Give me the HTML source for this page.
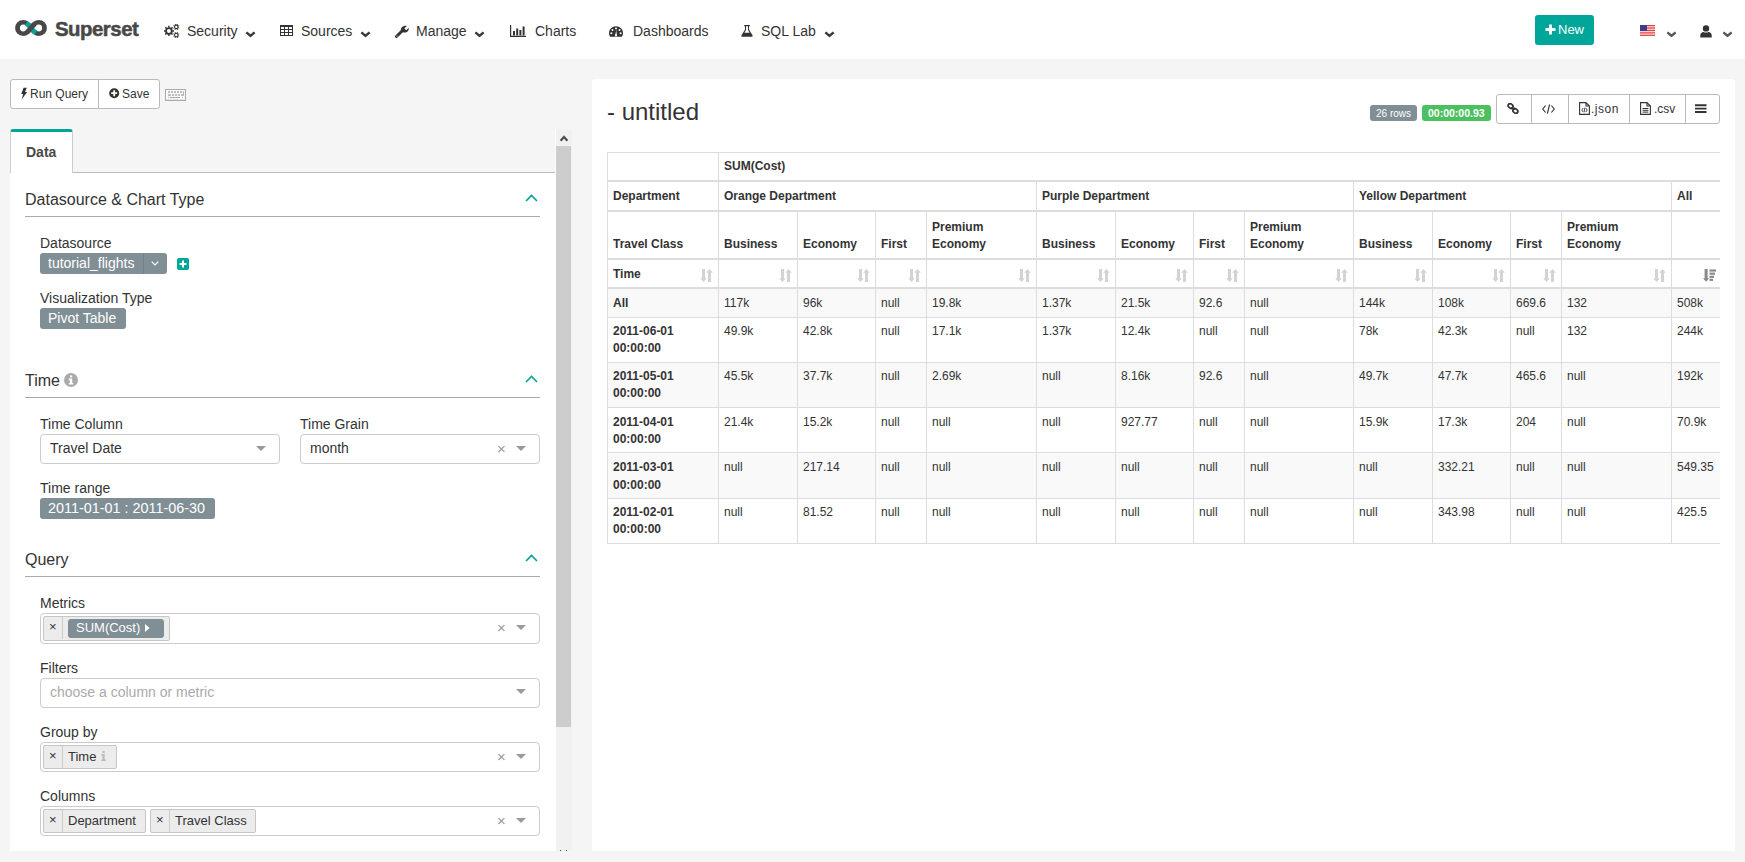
<!DOCTYPE html>
<html><head><meta charset="utf-8"><style>
*{box-sizing:border-box;margin:0;padding:0}
html,body{width:1745px;height:862px;overflow:hidden}
body{background:#f5f5f5;font-family:"Liberation Sans",sans-serif;color:#333;font-size:14px;position:relative}
.abs{position:absolute}
#nav{position:absolute;left:0;top:0;width:1745px;height:59px;background:#fff}
.nt{position:absolute;top:23px;font-size:14px;color:#333;line-height:16px;white-space:nowrap}
.car{position:absolute}

.btn{background:#fff;border:1px solid #bbb}
.t12{position:absolute;font-size:12px;line-height:14px;color:#333;white-space:nowrap}
.t14{font-size:14px;line-height:16px;color:#333;white-space:nowrap}
.wt14{font-size:14px;line-height:16px;color:#fff;white-space:nowrap}
.h16{position:absolute;font-size:16px;line-height:18px;color:#333;white-space:nowrap}
.lbl{position:absolute;font-size:14px;line-height:16px;color:#333;white-space:nowrap}
.hr{height:1px;background:#aaa}
.chev{position:absolute}
.sel{background:#fff;border:1px solid #ccc;border-radius:4px}
.arr{position:absolute;width:0;height:0;border-left:5px solid transparent;border-right:5px solid transparent;border-top:5px solid #999}
.xx{position:absolute;font-size:15px;line-height:16px;color:#999}
.tag{background:#ececec;border:1px solid #c6c6c6;border-radius:2px}
.tx{position:absolute;font-size:13px;line-height:14px;color:#333}

.pt{border-collapse:collapse;table-layout:fixed;width:1114px;font-size:12px;color:#333}
.pt th,.pt td{border:1px solid #ddd;padding:5px;line-height:17.14px;text-align:left;vertical-align:top}
.pt thead th{vertical-align:bottom;border-bottom-width:2px;font-weight:bold}
.pt tbody th{font-weight:bold}
.pt tbody tr:nth-child(odd){background:#f9f9f9}
.pt .si{float:right;margin-top:2px}
.pt .tm .si{margin-top:4px}
.pt .sd{margin-right:2px}
.pt .tm span{position:relative;top:1px}
.pt tbody th,.pt tbody td{line-height:17px}
.pt tr.lh18 th,.pt tr.lh18 td{line-height:18px}
.pt tr.r3 th{padding-top:6.72px}
.pt tr.dn th,.pt tr.dn td{padding-top:6px;padding-bottom:4px}
.pt tr.lh175 th,.pt tr.lh175 td{line-height:17.5px}
</style></head><body>
<div id="nav">
  <svg class="abs" style="left:15px;top:20px" width="32" height="16" viewBox="0 0 32 17" preserveAspectRatio="none">
    <path d="M8.5 2.5 C4.5 2.5 2.5 5.2 2.5 8.5 C2.5 11.8 4.5 14.5 8.5 14.5 C12.5 14.5 14.5 11 16 8.5 C17.5 6 19.5 2.5 23.5 2.5 C27.5 2.5 29.5 5.2 29.5 8.5 C29.5 11.8 27.5 14.5 23.5 14.5 C19.5 14.5 17.5 11 16 8.5 C14.5 6 12.5 2.5 8.5 2.5 Z" fill="none" stroke="#484848" stroke-width="4.8"/>
    <path d="M11.2 3.4 C13.5 4.8 14.7 6.6 16 8.5 C17.3 10.4 18.5 12.2 20.8 13.6" fill="none" stroke="#00a699" stroke-width="4.8"/>
    <path d="M12 12.9 C13.9 11.4 14.9 9.9 16 8.5 C17.1 7.1 18.1 5.6 20 4.1" fill="none" stroke="#484848" stroke-width="4.8"/>
  </svg>
  <div class="nt" style="left:55px;top:18px;font-size:20.4px;font-weight:bold;color:#484848;line-height:22px;-webkit-text-stroke:0.5px #484848;letter-spacing:-0.5px">Superset</div>

  <!-- cogs -->
  <svg class="abs" style="left:164px;top:24px" width="17" height="15" viewBox="0 0 17 15"><circle cx="4.9" cy="6.95" r="2.9" fill="none" stroke="#333" stroke-width="1.8"/><line x1="8.30" y1="6.95" x2="10.00" y2="6.95" stroke="#333" stroke-width="1.5"/><line x1="7.30" y1="9.35" x2="8.51" y2="10.56" stroke="#333" stroke-width="1.5"/><line x1="4.90" y1="10.35" x2="4.90" y2="12.05" stroke="#333" stroke-width="1.5"/><line x1="2.50" y1="9.35" x2="1.29" y2="10.56" stroke="#333" stroke-width="1.5"/><line x1="1.50" y1="6.95" x2="-0.20" y2="6.95" stroke="#333" stroke-width="1.5"/><line x1="2.50" y1="4.55" x2="1.29" y2="3.34" stroke="#333" stroke-width="1.5"/><line x1="4.90" y1="3.55" x2="4.90" y2="1.85" stroke="#333" stroke-width="1.5"/><line x1="7.30" y1="4.55" x2="8.51" y2="3.34" stroke="#333" stroke-width="1.5"/><circle cx="12.3" cy="2.9" r="1.75" fill="none" stroke="#333" stroke-width="1.1"/><line x1="14.24" y1="3.70" x2="15.16" y2="4.09" stroke="#333" stroke-width="1.0"/><line x1="13.10" y1="4.84" x2="13.49" y2="5.76" stroke="#333" stroke-width="1.0"/><line x1="11.50" y1="4.84" x2="11.11" y2="5.76" stroke="#333" stroke-width="1.0"/><line x1="10.36" y1="3.70" x2="9.44" y2="4.09" stroke="#333" stroke-width="1.0"/><line x1="10.36" y1="2.10" x2="9.44" y2="1.71" stroke="#333" stroke-width="1.0"/><line x1="11.50" y1="0.96" x2="11.11" y2="0.04" stroke="#333" stroke-width="1.0"/><line x1="13.10" y1="0.96" x2="13.49" y2="0.04" stroke="#333" stroke-width="1.0"/><line x1="14.24" y1="2.10" x2="15.16" y2="1.71" stroke="#333" stroke-width="1.0"/><circle cx="12.3" cy="11.05" r="1.75" fill="none" stroke="#333" stroke-width="1.1"/><line x1="14.24" y1="11.85" x2="15.16" y2="12.24" stroke="#333" stroke-width="1.0"/><line x1="13.10" y1="12.99" x2="13.49" y2="13.91" stroke="#333" stroke-width="1.0"/><line x1="11.50" y1="12.99" x2="11.11" y2="13.91" stroke="#333" stroke-width="1.0"/><line x1="10.36" y1="11.85" x2="9.44" y2="12.24" stroke="#333" stroke-width="1.0"/><line x1="10.36" y1="10.25" x2="9.44" y2="9.86" stroke="#333" stroke-width="1.0"/><line x1="11.50" y1="9.11" x2="11.11" y2="8.19" stroke="#333" stroke-width="1.0"/><line x1="13.10" y1="9.11" x2="13.49" y2="8.19" stroke="#333" stroke-width="1.0"/><line x1="14.24" y1="10.25" x2="15.16" y2="9.86" stroke="#333" stroke-width="1.0"/></svg>
  <div class="nt" style="left:187px">Security</div>
  <svg class="car" style="left:245px;top:31px" width="11" height="7" viewBox="0 0 11 7"><path d="M1.4 1.4 L5.5 4.9 L9.6 1.4" fill="none" stroke="#3a3a3a" stroke-width="2.5" stroke-linejoin="round"/></svg>

  <!-- table -->
  <svg class="abs" style="left:280px;top:25px" width="13" height="11" viewBox="0 0 13 11" shape-rendering="crispEdges"><rect width="13" height="11" fill="#333"/><rect x="1" y="2" width="3" height="2" fill="#fff"/><rect x="1" y="5" width="3" height="2" fill="#fff"/><rect x="1" y="8" width="3" height="2" fill="#fff"/><rect x="5" y="2" width="3" height="2" fill="#fff"/><rect x="5" y="5" width="3" height="2" fill="#fff"/><rect x="5" y="8" width="3" height="2" fill="#fff"/><rect x="9" y="2" width="3" height="2" fill="#fff"/><rect x="9" y="5" width="3" height="2" fill="#fff"/><rect x="9" y="8" width="3" height="2" fill="#fff"/></svg>
  <div class="nt" style="left:301px">Sources</div>
  <svg class="car" style="left:360px;top:31px" width="11" height="7" viewBox="0 0 11 7"><path d="M1.4 1.4 L5.5 4.9 L9.6 1.4" fill="none" stroke="#3a3a3a" stroke-width="2.5" stroke-linejoin="round"/></svg>

  <!-- wrench -->
  <svg class="abs" style="left:395px;top:25px" width="14" height="13" viewBox="0 0 14 13">
    <path d="M1.5 11.5 L7 6" stroke="#333" stroke-width="3" stroke-linecap="round"/>
    <path d="M6.2 6.8 C5.2 4.5 6.2 1.4 9.2 0.9 C10.2 0.7 11 0.9 11.6 1.2 L9.4 3.3 L10.2 4.6 L11.6 4.9 L13.6 2.7 C14.1 4.6 13.2 6.8 11 7.4 C9.7 7.8 8.4 7.6 7.4 6.9 Z" fill="#333"/>
    <circle cx="2" cy="11" r="0.6" fill="#fff"/>
  </svg>
  <div class="nt" style="left:416px">Manage</div>
  <svg class="car" style="left:474px;top:31px" width="11" height="7" viewBox="0 0 11 7"><path d="M1.4 1.4 L5.5 4.9 L9.6 1.4" fill="none" stroke="#3a3a3a" stroke-width="2.5" stroke-linejoin="round"/></svg>

  <!-- bar chart -->
  <svg class="abs" style="left:510px;top:25px" width="16" height="12" viewBox="0 0 16 12">
    <path d="M0.6 0 V11.4 H16" fill="none" stroke="#333" stroke-width="1.2"/>
    <rect x="3" y="6" width="2" height="4.5" fill="#333"/>
    <rect x="6.2" y="3.5" width="2" height="7" fill="#333"/>
    <rect x="9.4" y="5" width="2" height="5.5" fill="#333"/>
    <rect x="12.6" y="1.5" width="2" height="9" fill="#333"/>
  </svg>
  <div class="nt" style="left:535px">Charts</div>

  <!-- dashboard -->
  <svg class="abs" style="left:609px;top:26px" width="14" height="11" viewBox="0 0 14 11">
    <path d="M7 0.2 C3.1 0.2 0 3.3 0 7.1 C0 8.5 0.4 9.8 1.1 10.8 L12.9 10.8 C13.6 9.8 14 8.5 14 7.1 C14 3.3 10.9 0.2 7 0.2 Z" fill="#333"/>
    <g fill="#fff"><circle cx="2.4" cy="7.3" r="1"/><circle cx="3.5" cy="4" r="1"/><circle cx="7" cy="2.4" r="1"/><circle cx="10.5" cy="4" r="1"/><circle cx="11.6" cy="7.3" r="1"/></g>
    <path d="M6.2 9.8 L7.2 4 L7.9 9.8 Z" fill="#fff"/><circle cx="7" cy="9.4" r="1.1" fill="#fff"/>
  </svg>
  <div class="nt" style="left:633px">Dashboards</div>

  <!-- flask -->
  <svg class="abs" style="left:741px;top:25px" width="12" height="12" viewBox="0 0 12 12">
    <path d="M3.2 0 H8.8 V1.2 H8 V4.6 L11.6 10.6 C11.9 11.3 11.6 11.8 10.9 11.8 H1.1 C0.4 11.8 0.1 11.3 0.4 10.6 L4 4.6 V1.2 H3.2 Z" fill="#333"/>
    <path d="M5 1.2 V5 L3.4 7.8 H8.6 L7 5 V1.2 Z" fill="#fff"/>
  </svg>
  <div class="nt" style="left:761px">SQL Lab</div>
  <svg class="car" style="left:824px;top:31px" width="11" height="7" viewBox="0 0 11 7"><path d="M1.4 1.4 L5.5 4.9 L9.6 1.4" fill="none" stroke="#3a3a3a" stroke-width="2.5" stroke-linejoin="round"/></svg>

  <!-- New button -->
  <div class="abs" style="left:1535px;top:15px;width:59px;height:30px;background:#00a699;border-radius:3px"></div>
  <svg class="abs" style="left:1545px;top:24px" width="11" height="11" viewBox="0 0 11 11"><path d="M5.5 0.5 V10.5 M0.5 5.5 H10.5" stroke="#fff" stroke-width="2.8"/></svg>
  <div class="nt" style="left:1558px;top:22px;color:#fff;font-size:13px">New</div>

  <!-- flag -->
  <svg class="abs" style="left:1640px;top:25px" width="15" height="11" viewBox="0 0 15 11">
    <rect width="15" height="11" fill="#fff"/>
    <g fill="#d22">
      <rect y="0" width="15" height="0.85"/><rect y="1.7" width="15" height="0.85"/><rect y="3.4" width="15" height="0.85"/><rect y="5.1" width="15" height="0.85"/><rect y="6.8" width="15" height="0.85"/><rect y="8.5" width="15" height="0.85"/><rect y="10.2" width="15" height="0.8"/>
    </g>
    <rect width="7" height="5.9" fill="#3c3b8e"/>
  </svg>
  <svg class="car" style="left:1666px;top:31px" width="11" height="7" viewBox="0 0 11 7"><path d="M1.4 1.4 L5.5 4.9 L9.6 1.4" fill="none" stroke="#555" stroke-width="2.5" stroke-linejoin="round"/></svg>
  <!-- user -->
  <svg class="abs" style="left:1700px;top:25px" width="12" height="13" viewBox="0 0 12 13">
    <circle cx="6" cy="3.4" r="3.2" fill="#333"/>
    <path d="M0.3 12.6 V10.3 C0.3 8.2 1.8 7 3.6 6.9 C4.2 7.4 5 7.6 6 7.6 C7 7.6 7.8 7.4 8.4 6.9 C10.2 7 11.7 8.2 11.7 10.3 V12.6 Z" fill="#333"/>
  </svg>
  <svg class="car" style="left:1722px;top:31px" width="11" height="7" viewBox="0 0 11 7"><path d="M1.4 1.4 L5.5 4.9 L9.6 1.4" fill="none" stroke="#555" stroke-width="2.5" stroke-linejoin="round"/></svg>
</div>
<!-- LEFT -->
<div class="abs btn" style="left:10px;top:79px;width:89px;height:30px;border-radius:3px 0 0 3px"></div>
<div class="abs btn" style="left:98px;top:79px;width:62px;height:30px;border-radius:0 3px 3px 0"></div>
<svg class="abs" style="left:20px;top:87px" width="8" height="13" viewBox="0 0 8 13"><path d="M3.6 0.8 H6.8 L5 5 H7.2 L1.6 12.6 L3.2 7 H1.2 Z" fill="#333"/></svg>
<div class="t12" style="left:30px;top:87px">Run Query</div>
<svg class="abs" style="left:109px;top:88px" width="11" height="11" viewBox="0 0 11 11"><circle cx="5.2" cy="5.2" r="5" fill="#333"/><path d="M5.2 2.2 V8.2 M2.2 5.2 H8.2" stroke="#fff" stroke-width="1.8"/></svg>
<div class="t12" style="left:122px;top:87px">Save</div>
<svg class="abs" style="left:165px;top:89px" width="21" height="12" viewBox="0 0 21 12" shape-rendering="crispEdges">
  <rect x="0" y="0" width="21" height="12" rx="1" fill="#aaa"/><rect x="1" y="1" width="19" height="10" fill="#fafafa"/><rect x="1" y="10" width="19" height="1" fill="#e4e4e4"/>
  <g fill="#bdbdbd"><rect x="3" y="2" width="2" height="2"/><rect x="6" y="2" width="2" height="2"/><rect x="9" y="2" width="2" height="2"/><rect x="12" y="2" width="2" height="2"/><rect x="15" y="2" width="2" height="2"/><rect x="18" y="2" width="1" height="5"/>
  <rect x="3" y="5" width="3" height="2"/><rect x="7" y="5" width="2" height="2"/><rect x="10" y="5" width="2" height="2"/><rect x="13" y="5" width="2" height="2"/><rect x="16" y="5" width="2" height="2"/>
  <rect x="3" y="8" width="1" height="1"/><rect x="5" y="8" width="10" height="1" fill="#aaa"/><rect x="17" y="8" width="1" height="1"/></g>
</svg>

<!-- tabs -->
<div class="abs" style="left:10px;top:172px;width:546px;height:1px;background:#bbb"></div>
<div class="abs" style="left:10px;top:129px;width:63px;height:44px;background:#fff;border:1px solid #ccc;border-top:3px solid #00a699;border-bottom:none;border-radius:3px 3px 0 0"></div>
<div class="abs" style="left:26px;top:144px;font-size:14px;font-weight:bold;color:#484848;line-height:16px">Data</div>
<div class="abs" style="left:10px;top:173px;width:546px;height:678px;background:#fff"></div>

<!-- scrollbar -->
<div class="abs" style="left:556px;top:129px;width:16px;height:722px;background:#f1f1f1"></div>
<div class="abs" style="left:556px;top:146px;width:15px;height:581px;background:#cdcdcd"></div>
<svg class="abs" style="left:559px;top:134px" width="10" height="8" viewBox="0 0 10 8"><path d="M1.6 6.8 L5 3 L8.4 6.8" fill="none" stroke="#505050" stroke-width="2.2" stroke-linejoin="miter"/></svg>
<div class="abs" style="left:555px;top:129px;width:1px;height:44px;background:#fff"></div>
<div class="abs" style="left:560px;top:850px;width:1px;height:1px;background:#444"></div>
<div class="abs" style="left:566px;top:850px;width:1px;height:1px;background:#444"></div>

<!-- section 1 -->
<div class="h16" style="left:25px;top:191px">Datasource &amp; Chart Type</div>
<svg class="chev" style="left:525px;top:194px" width="13" height="8" viewBox="0 0 13 8"><path d="M1 7 L6.5 1.5 L12 7" fill="none" stroke="#00a699" stroke-width="1.6"/></svg>
<div class="abs hr" style="left:25px;top:216px;width:515px"></div>
<div class="lbl" style="left:40px;top:235px">Datasource</div>
<div class="abs" style="left:40px;top:253px;width:127px;height:21px;background:#808e95;border-radius:3px"></div>
<div class="abs" style="left:143px;top:253px;width:1px;height:21px;background:#748187"></div>
<div class="abs wt14" style="left:48px;top:255px">tutorial_flights</div>
<svg class="abs" style="left:151px;top:261px" width="8" height="5" viewBox="0 0 8 5"><path d="M0.7 0.7 L4 4 L7.3 0.7" fill="none" stroke="#fff" stroke-width="1.2"/></svg>
<div class="abs" style="left:177px;top:258px;width:12px;height:12px;background:#00a699;border-radius:2px"></div>
<svg class="abs" style="left:177px;top:258px" width="12" height="12" viewBox="0 0 12 12"><path d="M6 2.5 V9.5 M2.5 6 H9.5" stroke="#fff" stroke-width="2"/></svg>
<div class="lbl" style="left:40px;top:290px">Visualization Type</div>
<div class="abs" style="left:40px;top:308px;width:86px;height:21px;background:#808e95;border-radius:3px"></div>
<div class="abs wt14" style="left:48px;top:310px">Pivot Table</div>

<!-- section time -->
<div class="h16" style="left:25px;top:372px">Time</div>
<svg class="abs" style="left:64px;top:373px" width="14" height="14" viewBox="0 0 14 14"><circle cx="7" cy="7" r="7" fill="#aaa"/><rect x="6" y="2.4" width="2.2" height="2" fill="#fff"/><path d="M4.8 5.6 H8.2 V10 H9.2 V11.6 H4.8 V10 H5.9 V7.2 H4.8 Z" fill="#fff"/></svg>
<svg class="chev" style="left:525px;top:375px" width="13" height="8" viewBox="0 0 13 8"><path d="M1 7 L6.5 1.5 L12 7" fill="none" stroke="#00a699" stroke-width="1.6"/></svg>
<div class="abs hr" style="left:25px;top:397px;width:515px"></div>
<div class="lbl" style="left:40px;top:416px">Time Column</div>
<div class="lbl" style="left:300px;top:416px">Time Grain</div>
<div class="abs sel" style="left:40px;top:434px;width:240px;height:30px"></div>
<div class="abs t14" style="left:50px;top:440px">Travel Date</div>
<div class="arr" style="left:256px;top:446px"></div>
<div class="abs sel" style="left:300px;top:434px;width:240px;height:30px"></div>
<div class="abs t14" style="left:310px;top:440px">month</div>
<div class="xx" style="left:497px;top:441px">×</div>
<div class="arr" style="left:516px;top:446px"></div>
<div class="lbl" style="left:40px;top:480px">Time range</div>
<div class="abs" style="left:40px;top:498px;width:175px;height:21px;background:#808e95;border-radius:3px"></div>
<div class="abs wt14" style="left:48px;top:500px;font-size:14.4px">2011-01-01 : 2011-06-30</div>

<!-- section query -->
<div class="h16" style="left:25px;top:551px">Query</div>
<svg class="chev" style="left:525px;top:554px" width="13" height="8" viewBox="0 0 13 8"><path d="M1 7 L6.5 1.5 L12 7" fill="none" stroke="#00a699" stroke-width="1.6"/></svg>
<div class="abs hr" style="left:25px;top:576px;width:515px"></div>

<div class="lbl" style="left:40px;top:595px">Metrics</div>
<div class="abs sel" style="left:40px;top:613px;width:500px;height:31px"></div>
<div class="abs tag" style="left:43px;top:616px;width:127px;height:25px"></div>
<div class="abs" style="left:62px;top:617px;width:1px;height:22px;background:#ccc"></div>
<div class="tx" style="left:49px;top:620px">×</div>
<div class="abs" style="left:68px;top:619px;width:96px;height:19px;background:#808e95;border-radius:3px"></div>
<div class="abs" style="left:76px;top:620px;font-size:13px;color:#fff;line-height:15px">SUM(Cost)</div>
<svg class="abs" style="left:145px;top:624px" width="5" height="8" viewBox="0 0 5 8"><path d="M0 0 L4.6 4 L0 8 Z" fill="#fff"/></svg>
<div class="xx" style="left:497px;top:620px">×</div>
<div class="arr" style="left:516px;top:625px"></div>

<div class="lbl" style="left:40px;top:660px">Filters</div>
<div class="abs sel" style="left:40px;top:678px;width:500px;height:30px"></div>
<div class="abs t14" style="left:50px;top:684px;color:#aaa">choose a column or metric</div>
<div class="arr" style="left:516px;top:689px"></div>

<div class="lbl" style="left:40px;top:724px">Group by</div>
<div class="abs sel" style="left:40px;top:742px;width:500px;height:30px"></div>
<div class="abs tag" style="left:43px;top:745px;width:74px;height:24px"></div>
<div class="abs" style="left:62px;top:746px;width:1px;height:22px;background:#ccc"></div>
<div class="tx" style="left:49px;top:749px">×</div>
<div class="abs" style="left:68px;top:749px;font-size:13px;color:#333;line-height:15px">Time</div>
<svg class="abs" style="left:101px;top:751px" width="5" height="10" viewBox="0 0 5 10"><rect x="1.5" y="0" width="2.2" height="2" fill="#bbb"/><path d="M0.3 3 H3.7 V8.4 H4.8 V10 H0.3 V8.4 H1.4 V4.5 H0.3 Z" fill="#bbb"/></svg>
<div class="xx" style="left:497px;top:749px">×</div>
<div class="arr" style="left:516px;top:754px"></div>

<div class="lbl" style="left:40px;top:788px">Columns</div>
<div class="abs sel" style="left:40px;top:806px;width:500px;height:30px"></div>
<div class="abs tag" style="left:43px;top:809px;width:103px;height:24px"></div>
<div class="abs" style="left:62px;top:810px;width:1px;height:22px;background:#ccc"></div>
<div class="tx" style="left:49px;top:813px">×</div>
<div class="abs" style="left:68px;top:813px;font-size:13px;color:#333;line-height:15px">Department</div>
<div class="abs tag" style="left:150px;top:809px;width:106px;height:24px"></div>
<div class="abs" style="left:169px;top:810px;width:1px;height:22px;background:#ccc"></div>
<div class="tx" style="left:156px;top:813px">×</div>
<div class="abs" style="left:175px;top:813px;font-size:13px;color:#333;line-height:15px">Travel Class</div>
<div class="xx" style="left:497px;top:813px">×</div>
<div class="arr" style="left:516px;top:818px"></div>
<!-- /LEFT -->
<!-- RIGHT -->
<div class="abs" style="left:592px;top:79px;width:1143px;height:772px;background:#fff;border-radius:3px 3px 0 0"></div>
<div class="abs" style="left:607px;top:98px;font-size:24px;line-height:28px;color:#333;white-space:nowrap">- untitled</div>
<div class="abs" style="left:1370px;top:105px;width:47px;height:16px;background:#808e95;border-radius:3px"></div>
<div class="abs" style="left:1376px;top:108px;font-size:10px;line-height:12px;color:#fff;white-space:nowrap">26 rows</div>
<div class="abs" style="left:1422px;top:105px;width:69px;height:16px;background:#4cbf5f;border-radius:3px"></div>
<div class="abs" style="left:1428px;top:107px;font-size:10.5px;line-height:12px;color:#fff;font-weight:bold;white-space:nowrap">00:00:00.93</div>
<div class="abs btn" style="left:1496px;top:94px;width:224px;height:30px;border-radius:3px"></div>
<div class="abs" style="left:1531px;top:95px;width:1px;height:28px;background:#bbb"></div>
<div class="abs" style="left:1568px;top:95px;width:1px;height:28px;background:#bbb"></div>
<div class="abs" style="left:1629px;top:95px;width:1px;height:28px;background:#bbb"></div>
<div class="abs" style="left:1685px;top:95px;width:1px;height:28px;background:#bbb"></div>
<svg class="abs" style="left:1507px;top:103px" width="12" height="11" viewBox="0 0 12 11"><g fill="none" stroke="#333" stroke-width="1.7"><rect x="1" y="1" width="5.2" height="4" rx="2" transform="rotate(40 3.6 3)"/><rect x="5.8" y="6" width="5.2" height="4" rx="2" transform="rotate(40 8.4 8)"/></g><path d="M4.6 4 L7.4 7" stroke="#333" stroke-width="1.5"/></svg>
<svg class="abs" style="left:1542px;top:104px" width="13" height="10" viewBox="0 0 13 10"><path d="M3.6 1.5 L0.8 5 L3.6 8.5 M9.4 1.5 L12.2 5 L9.4 8.5 M7.6 0.5 L5.4 9.5" fill="none" stroke="#333" stroke-width="1.1"/></svg>
<svg class="abs" style="left:1579px;top:102px" width="11" height="13" viewBox="0 0 11 13"><path d="M0.6 0.6 H7 L10.4 4 V12.4 H0.6 Z M7 0.6 V4 H10.4" fill="none" stroke="#333" stroke-width="1.1"/><path d="M4.2 6 L2.8 8 L4.2 10 M6.8 6 L8.2 8 L6.8 10 M5.9 5.6 L5.1 10.4" fill="none" stroke="#333" stroke-width="0.9"/></svg>
<div class="abs" style="left:1591px;top:102px;font-size:12px;line-height:14px;color:#333;letter-spacing:0.5px">.json</div>
<svg class="abs" style="left:1640px;top:102px" width="11" height="13" viewBox="0 0 11 13"><path d="M0.6 0.6 H7 L10.4 4 V12.4 H0.6 Z M7 0.6 V4 H10.4" fill="none" stroke="#333" stroke-width="1.1"/><path d="M2.6 6.5 H8.4 M2.6 8.3 H8.4 M2.6 10.1 H8.4" stroke="#333" stroke-width="1"/></svg>
<div class="abs" style="left:1654px;top:102px;font-size:12px;line-height:14px;color:#333">.csv</div>
<svg class="abs" style="left:1695px;top:104px" width="12" height="10" viewBox="0 0 12 10"><path d="M0 1.2 H11.5 M0 4.6 H11.5 M0 8 H11.5" stroke="#333" stroke-width="1.9"/></svg>
<div id="tw" class="abs" style="left:607px;top:152px;width:1113px;height:400px;overflow:hidden">
<table class="pt"><colgroup><col style="width:111px"><col style="width:79px"><col style="width:78px"><col style="width:51px"><col style="width:110px"><col style="width:79px"><col style="width:78px"><col style="width:51px"><col style="width:109px"><col style="width:79px"><col style="width:78px"><col style="width:51px"><col style="width:110px"><col style="width:50px"></colgroup><thead><tr><th></th><th colspan="13">SUM(Cost)</th></tr><tr class="lh18"><th>Department</th><th colspan="4">Orange Department</th><th colspan="4">Purple Department</th><th colspan="4">Yellow Department</th><th>All</th></tr><tr class="r3"><th>Travel Class</th><th>Business</th><th>Economy</th><th>First</th><th>Premium Economy</th><th>Business</th><th>Economy</th><th>First</th><th>Premium Economy</th><th>Business</th><th>Economy</th><th>First</th><th>Premium Economy</th><th></th></tr><tr class="srt"><th class="tm"><span>Time</span><svg class="si" width="13" height="13" viewBox="0 0 13 12" preserveAspectRatio="none"><path d="M2 0 H5 V8.6 H6.8 L3.5 12 L0.2 8.6 H2 Z M8 12 H11 V3.4 H12.8 L9.5 0 L6.2 3.4 H8 Z" fill="#d3d3d3"/></svg></th><th><svg class="si" width="13" height="13" viewBox="0 0 13 12" preserveAspectRatio="none"><path d="M2 0 H5 V8.6 H6.8 L3.5 12 L0.2 8.6 H2 Z M8 12 H11 V3.4 H12.8 L9.5 0 L6.2 3.4 H8 Z" fill="#d3d3d3"/></svg></th><th><svg class="si" width="13" height="13" viewBox="0 0 13 12" preserveAspectRatio="none"><path d="M2 0 H5 V8.6 H6.8 L3.5 12 L0.2 8.6 H2 Z M8 12 H11 V3.4 H12.8 L9.5 0 L6.2 3.4 H8 Z" fill="#d3d3d3"/></svg></th><th><svg class="si" width="13" height="13" viewBox="0 0 13 12" preserveAspectRatio="none"><path d="M2 0 H5 V8.6 H6.8 L3.5 12 L0.2 8.6 H2 Z M8 12 H11 V3.4 H12.8 L9.5 0 L6.2 3.4 H8 Z" fill="#d3d3d3"/></svg></th><th><svg class="si" width="13" height="13" viewBox="0 0 13 12" preserveAspectRatio="none"><path d="M2 0 H5 V8.6 H6.8 L3.5 12 L0.2 8.6 H2 Z M8 12 H11 V3.4 H12.8 L9.5 0 L6.2 3.4 H8 Z" fill="#d3d3d3"/></svg></th><th><svg class="si" width="13" height="13" viewBox="0 0 13 12" preserveAspectRatio="none"><path d="M2 0 H5 V8.6 H6.8 L3.5 12 L0.2 8.6 H2 Z M8 12 H11 V3.4 H12.8 L9.5 0 L6.2 3.4 H8 Z" fill="#d3d3d3"/></svg></th><th><svg class="si" width="13" height="13" viewBox="0 0 13 12" preserveAspectRatio="none"><path d="M2 0 H5 V8.6 H6.8 L3.5 12 L0.2 8.6 H2 Z M8 12 H11 V3.4 H12.8 L9.5 0 L6.2 3.4 H8 Z" fill="#d3d3d3"/></svg></th><th><svg class="si" width="13" height="13" viewBox="0 0 13 12" preserveAspectRatio="none"><path d="M2 0 H5 V8.6 H6.8 L3.5 12 L0.2 8.6 H2 Z M8 12 H11 V3.4 H12.8 L9.5 0 L6.2 3.4 H8 Z" fill="#d3d3d3"/></svg></th><th><svg class="si" width="13" height="13" viewBox="0 0 13 12" preserveAspectRatio="none"><path d="M2 0 H5 V8.6 H6.8 L3.5 12 L0.2 8.6 H2 Z M8 12 H11 V3.4 H12.8 L9.5 0 L6.2 3.4 H8 Z" fill="#d3d3d3"/></svg></th><th><svg class="si" width="13" height="13" viewBox="0 0 13 12" preserveAspectRatio="none"><path d="M2 0 H5 V8.6 H6.8 L3.5 12 L0.2 8.6 H2 Z M8 12 H11 V3.4 H12.8 L9.5 0 L6.2 3.4 H8 Z" fill="#d3d3d3"/></svg></th><th><svg class="si" width="13" height="13" viewBox="0 0 13 12" preserveAspectRatio="none"><path d="M2 0 H5 V8.6 H6.8 L3.5 12 L0.2 8.6 H2 Z M8 12 H11 V3.4 H12.8 L9.5 0 L6.2 3.4 H8 Z" fill="#d3d3d3"/></svg></th><th><svg class="si" width="13" height="13" viewBox="0 0 13 12" preserveAspectRatio="none"><path d="M2 0 H5 V8.6 H6.8 L3.5 12 L0.2 8.6 H2 Z M8 12 H11 V3.4 H12.8 L9.5 0 L6.2 3.4 H8 Z" fill="#d3d3d3"/></svg></th><th><svg class="si" width="13" height="13" viewBox="0 0 13 12" preserveAspectRatio="none"><path d="M2 0 H5 V8.6 H6.8 L3.5 12 L0.2 8.6 H2 Z M8 12 H11 V3.4 H12.8 L9.5 0 L6.2 3.4 H8 Z" fill="#d3d3d3"/></svg></th><th><svg class="si" width="13" height="13" viewBox="0 0 13 12" preserveAspectRatio="none"><path d="M1.6 0 H4.6 V8.6 H6.2 L3.1 11.8 L0 8.6 H1.6 Z" fill="#888"/><g fill="#888"><rect x="6.5" y="0.4" width="6.5" height="2"/><rect x="6.5" y="3.3" width="5.5" height="2"/><rect x="6.5" y="6.2" width="4.5" height="2"/><rect x="6.5" y="9" width="3.5" height="2"/></g></svg></th></tr></thead><tbody><tr class="lh18"><th>All</th><td>117k</td><td>96k</td><td>null</td><td>19.8k</td><td>1.37k</td><td>21.5k</td><td>92.6</td><td>null</td><td>144k</td><td>108k</td><td>669.6</td><td>132</td><td>508k</td></tr><tr><th>2011-06-01<br>00:00:00</th><td>49.9k</td><td>42.8k</td><td>null</td><td>17.1k</td><td>1.37k</td><td>12.4k</td><td>null</td><td>null</td><td>78k</td><td>42.3k</td><td>null</td><td>132</td><td>244k</td></tr><tr><th>2011-05-01<br>00:00:00</th><td>45.5k</td><td>37.7k</td><td>null</td><td>2.69k</td><td>null</td><td>8.16k</td><td>92.6</td><td>null</td><td>49.7k</td><td>47.7k</td><td>465.6</td><td>null</td><td>192k</td></tr><tr class="dn"><th>2011-04-01<br>00:00:00</th><td>21.4k</td><td>15.2k</td><td>null</td><td>null</td><td>null</td><td>927.77</td><td>null</td><td>null</td><td>15.9k</td><td>17.3k</td><td>204</td><td>null</td><td>70.9k</td></tr><tr class="lh175 dn"><th>2011-03-01<br>00:00:00</th><td>null</td><td>217.14</td><td>null</td><td>null</td><td>null</td><td>null</td><td>null</td><td>null</td><td>null</td><td>332.21</td><td>null</td><td>null</td><td>549.35</td></tr><tr><th>2011-02-01<br>00:00:00</th><td>null</td><td>81.52</td><td>null</td><td>null</td><td>null</td><td>null</td><td>null</td><td>null</td><td>null</td><td>343.98</td><td>null</td><td>null</td><td>425.5</td></tr></tbody></table>
</div>
<!-- /RIGHT -->
</body></html>
